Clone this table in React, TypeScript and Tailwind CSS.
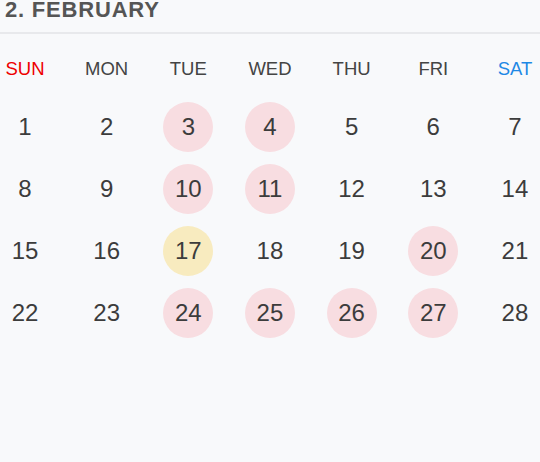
import React from "react";

const days = ["SUN", "MON", "TUE", "WED", "THU", "FRI", "SAT"];
const pink = new Set([3, 4, 10, 11, 20, 24, 25, 26, 27]);
const yellow = new Set([17]);

export default function App() {
  const weeks = [0, 1, 2, 3].map((w) => [1, 2, 3, 4, 5, 6, 7].map((d) => w * 7 + d));
  return (
    <div
      className="w-[540px] h-[462px] bg-[#f8f9fb] overflow-hidden"
      style={{ fontFamily: '"Liberation Sans", Arial, sans-serif' }}
    >
      <div className="h-[34px] border-b-2 border-[#e8e9ec] pl-[5px]">
        <div className="text-[22px] leading-[20px] font-bold text-[#555555] tracking-[0.8px]">
          2. FEBRUARY
        </div>
      </div>
      <div className="flex justify-between mt-[21px] mb-[19px]">
        {days.map((d, i) => (
          <div
            key={d}
            className={
              "w-[50px] h-[28px] flex items-center justify-center text-[18.5px] " +
              (i === 0 ? "text-[#ee0000]" : i === 6 ? "text-[#1e88e5]" : "text-[#444444]")
            }
          >
            {d}
          </div>
        ))}
      </div>
      <div className="flex flex-col gap-[12px]">
        {weeks.map((week, wi) => (
          <div key={wi} className="flex justify-between">
            {week.map((n) => (
              <div
                key={n}
                className={
                  "w-[50px] h-[50px] rounded-full flex items-center justify-center text-[24px] text-[#3c3c3c] " +
                  (pink.has(n) ? "bg-[#f8dde1]" : yellow.has(n) ? "bg-[#f8ebbf]" : "")
                }
              >
                {n}
              </div>
            ))}
          </div>
        ))}
      </div>
    </div>
  );
}
